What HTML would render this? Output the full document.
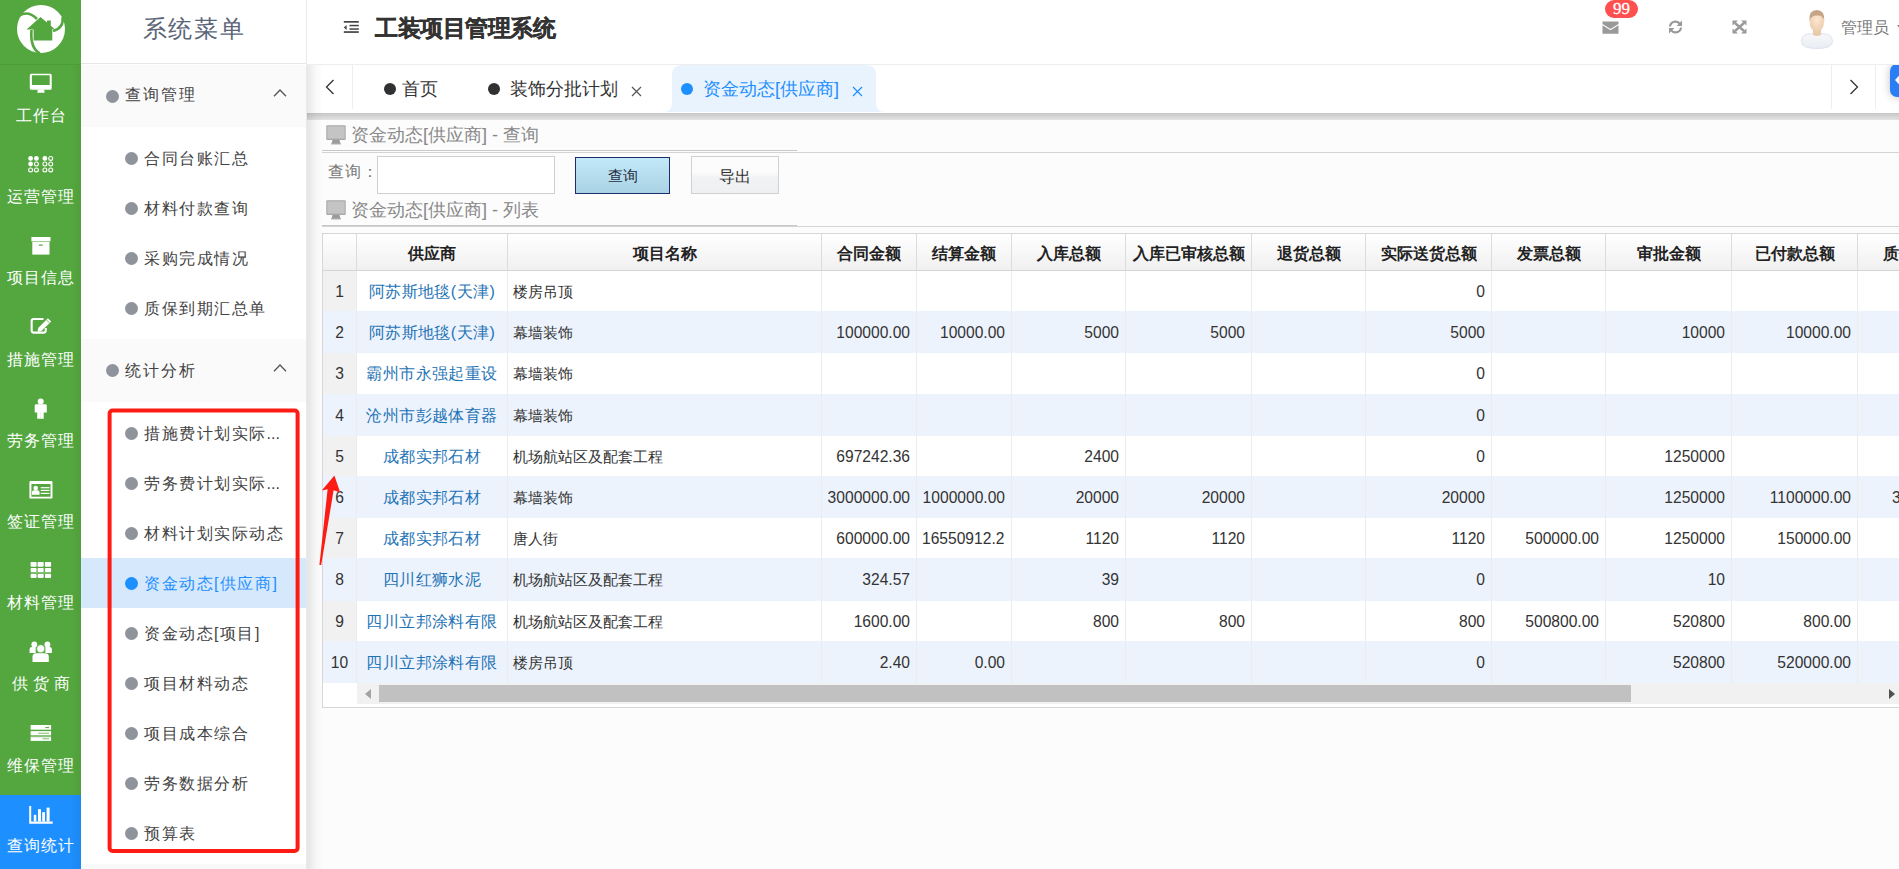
<!DOCTYPE html>
<html><head><meta charset="utf-8">
<style>
*{box-sizing:border-box}
html,body{margin:0;padding:0}
body{width:1899px;height:869px;overflow:hidden;position:relative;font-family:"Liberation Sans",sans-serif;background:#fcfcfc;color:#333}
.abs{position:absolute}
#lnav{left:0;top:0;width:81px;height:869px;background:#54a73f}
#lnav .it{position:absolute;left:0;width:81px;height:81.2px;color:#fff;font-size:16px;text-align:center}
#lnav .it .ic{position:absolute;left:0;width:81px;top:6px;height:22px}
#lnav .it .tx{position:absolute;left:0;width:81px;top:41px;line-height:20px;white-space:nowrap;letter-spacing:1px;text-indent:1px}
#lnav .on{background:#1e8ffe}
#menu{left:81px;top:0;width:226px;height:869px;background:#fff;border-right:1px solid #eaeaea}
#menu .ttl{position:absolute;left:0;top:0;width:225px;height:64px;border-bottom:1px solid #e6e6e6;text-align:center;line-height:58px;font-size:24px;color:#5b6578;letter-spacing:1.6px;text-indent:1px}
.grp{position:absolute;left:0;width:225px;height:62px;background:#fafafa;font-size:16px;color:#424242;letter-spacing:2.1px}
.grp .dot{position:absolute;left:25px;top:24.5px;width:13px;height:13px;border-radius:50%;background:#8f939b}
.grp .tx{position:absolute;left:44px;top:20px;line-height:20px}
.grp svg{position:absolute;left:192px;top:24px}
.sub{position:absolute;left:0;width:225px;height:50px;font-size:16px;color:#424242;letter-spacing:1.5px}
.sub .dot{position:absolute;left:44px;top:19px;width:13px;height:13px;border-radius:50%;background:#8f939b}
.sub .tx{position:absolute;left:63px;top:16px;line-height:20px;white-space:nowrap}
.sub.on{background:#d5e8fc;color:#1e8ffe}
.sub.on .dot{background:#1e8ffe}
#hdr{left:307px;top:0;width:1592px;height:65px;background:#fff;border-bottom:1px solid #eeeeee}
#tabs{left:307px;top:65px;width:1592px;height:48px;background:#fff;overflow:hidden}
.tab{position:absolute;top:13px;height:22px;line-height:22px;font-size:18px;color:#333;white-space:nowrap}
.tab .dt{display:inline-block;width:12px;height:12px;border-radius:50%;background:#303133;margin-right:10px;vertical-align:0px}
.tab .x{display:inline-block;margin-left:13px;vertical-align:-2px;stroke:#555}
.tab.on{color:#1e8ffe}
.tab.on .dt{background:#1e8ffe}
.tab.on .x{stroke:#1e8ffe}
.sect{position:absolute;left:326px;height:22px;white-space:nowrap;font-size:18px;color:#888;line-height:22px}
.sect svg{position:absolute;left:0;top:1px}
.sect span{position:absolute;left:25px;top:0}
.th{position:absolute;top:2px;height:36px;line-height:36px;text-align:center;font-size:16px;font-weight:bold;color:#222;white-space:nowrap;overflow:hidden}
.td{position:absolute;height:41px;line-height:41px;font-size:15.6px;padding-top:1px;color:#333;white-space:nowrap;overflow:hidden}
.td.num{text-align:center;color:#333}
.td.sup{text-align:center;color:#1f74b6;font-size:16px;letter-spacing:.4px}
.td.prj{padding-left:5px;font-size:15px}
.td.rt{text-align:right;padding-right:6px}
</style></head><body>

<!-- left green nav -->
<div id="lnav" class="abs">
  <svg class="abs" style="left:0;top:0" width="81" height="64" viewBox="0 0 81 64">
    <circle cx="41" cy="29" r="24" fill="#fff"/>
    <path d="M26.5 29.5 L40.5 17 L47 22.5 L47 20.6 L50.8 20.6 L50.8 25.8 L54.5 29 L52.3 29 L52.3 40.5 L33.6 40.5 L33.6 29.5 Z" fill="#54a73f"/>
    <path d="M19 15.8 Q28 10 37 19" stroke="#54a73f" stroke-width="2.6" fill="none"/>
    <path d="M62.6 17 Q64 28 53 31" stroke="#54a73f" stroke-width="2.6" fill="none"/>
    <path d="M39.8 53.4 Q30 48 31.5 30" stroke="#54a73f" stroke-width="2.6" fill="none"/>
  </svg>
  <div class="abs" style="left:0;top:64px;width:81px;height:1px;background:#4c9a38"></div>
  <div class="it" style="top:65px"><div class="ic"></div><div class="tx">工作台</div></div>
  <div class="it" style="top:146.2px"><div class="ic"></div><div class="tx">运营管理</div></div>
  <div class="it" style="top:227.4px"><div class="ic"></div><div class="tx">项目信息</div></div>
  <div class="it" style="top:308.6px"><div class="ic"></div><div class="tx">措施管理</div></div>
  <div class="it" style="top:389.8px"><div class="ic"></div><div class="tx">劳务管理</div></div>
  <div class="it" style="top:471px"><div class="ic"></div><div class="tx">签证管理</div></div>
  <div class="it" style="top:552.2px"><div class="ic"></div><div class="tx">材料管理</div></div>
  <div class="it" style="top:633.4px"><div class="ic"></div><div class="tx" style="letter-spacing:0.4px">供 货 商</div></div>
  <div class="it" style="top:714.6px"><div class="ic"></div><div class="tx">维保管理</div></div>
  <div class="it on" style="top:795px;height:74px"><div class="ic"></div><div class="tx">查询统计</div></div>
<svg class="abs" style="left:20px;top:66px" width="42" height="34" viewBox="0 0 42 34"><path fill-rule="evenodd" fill="#fff" d="M11.3 7.8 H30.2 Q31.7 7.8 31.7 9.3 V22.2 Q31.7 23.7 30.2 23.7 H11.3 Q9.8 23.7 9.8 22.2 V9.3 Q9.8 7.8 11.3 7.8 Z M11.9 9.2 V19 H29.7 V9.2 Z"/><path fill="#fff" d="M17.6 23.5 H24.3 V25.6 Q24.7 25.8 24.7 26.8 H17.2 Q17.2 25.8 17.6 25.6 Z"/></svg>
<svg class="abs" style="left:20px;top:148px" width="42" height="34" viewBox="0 0 42 34"><circle cx="10.6" cy="10.4" r="2.4" fill="#fff"/><circle cx="16.4" cy="10.4" r="2.4" fill="#fff"/><circle cx="24.9" cy="10.4" r="2.4" fill="#fff"/><circle cx="30.7" cy="10.4" r="1.95" fill="none" stroke="#fff" stroke-width="1.1"/><circle cx="10.6" cy="16.0" r="2.4" fill="#fff"/><circle cx="16.4" cy="16.0" r="1.95" fill="none" stroke="#fff" stroke-width="1.1"/><circle cx="24.9" cy="16.0" r="1.95" fill="none" stroke="#fff" stroke-width="1.1"/><circle cx="30.7" cy="16.0" r="1.95" fill="none" stroke="#fff" stroke-width="1.1"/><circle cx="10.6" cy="21.9" r="1.95" fill="none" stroke="#fff" stroke-width="1.1"/><circle cx="16.4" cy="21.9" r="1.95" fill="none" stroke="#fff" stroke-width="1.1"/><circle cx="24.9" cy="21.9" r="1.95" fill="none" stroke="#fff" stroke-width="1.1"/><circle cx="30.7" cy="21.9" r="1.95" fill="none" stroke="#fff" stroke-width="1.1"/></svg>
<svg class="abs" style="left:20px;top:229px" width="42" height="34" viewBox="0 0 42 34"><rect x="11.4" y="8" width="19.1" height="4.4" fill="#fff"/><rect x="12.3" y="12.9" width="17.2" height="12.7" fill="#fff"/><rect x="18.8" y="15.6" width="4.1" height="1.2" rx="0.6" fill="#54a73f"/></svg>
<svg class="abs" style="left:20px;top:310px" width="42" height="34" viewBox="0 0 42 34"><path d="M23.5 9.05 H13.7 Q11.65 9.05 11.65 11.1 V20.6 Q11.65 22.65 13.7 22.65 H23.7 Q25.75 22.65 25.75 20.6 V18" fill="none" stroke="#fff" stroke-width="2.1"/><path fill="#fff" d="M27.9 8.2 L31.2 11.4 L21.4 21.1 L17.6 21.9 L18.2 18 Z"/><path d="M26.3 9.8 L29.6 13" stroke="#54a73f" stroke-width="0.8"/></svg>
<svg class="abs" style="left:20px;top:392px" width="42" height="34" viewBox="0 0 42 34"><circle cx="20.7" cy="9.4" r="3" fill="#fff"/><path fill="#fff" d="M16 12.3 H25.5 Q26.8 12.3 26.8 13.6 V20.4 H23.7 V26.8 H17.2 V20.4 H14.7 V13.6 Q14.7 12.3 16 12.3 Z"/><rect x="20.3" y="20.4" width="0.5" height="6.4" fill="#d8e8d0"/></svg>
<svg class="abs" style="left:20px;top:473px" width="42" height="34" viewBox="0 0 42 34"><path fill-rule="evenodd" fill="#fff" d="M10.6 8 H31.3 Q32.5 8 32.5 9.2 V24.4 Q32.5 25.6 31.3 25.6 H10.6 Q9.4 25.6 9.4 24.4 V9.2 Q9.4 8 10.6 8 Z M11.4 11 V23.7 H30.5 V11 Z"/><circle cx="15.7" cy="15.1" r="2.3" fill="#fff"/><path fill="#fff" d="M11.9 21.7 V19.4 Q11.9 17.2 14.2 17.2 H17.3 Q19.6 17.2 19.6 19.4 V21.7 Z"/><rect x="20.7" y="14.1" width="8.8" height="1.2" fill="#fff"/><rect x="20.7" y="16.8" width="8.8" height="1.2" fill="#fff"/><rect x="20.7" y="19.8" width="8.8" height="1.2" fill="#fff"/></svg>
<svg class="abs" style="left:20px;top:554px" width="42" height="34" viewBox="0 0 42 34"><rect x="10.6" y="8" width="6" height="4.7" rx="0.8" fill="#fff"/><rect x="17.6" y="8" width="6.1" height="4.7" rx="0.8" fill="#fff"/><rect x="24.9" y="8" width="6.2" height="4.7" rx="0.8" fill="#fff"/><rect x="10.6" y="14.1" width="6" height="3.9" rx="0.8" fill="#fff"/><rect x="17.6" y="14.1" width="6.1" height="3.9" rx="0.8" fill="#fff"/><rect x="24.9" y="14.1" width="6.2" height="3.9" rx="0.8" fill="#fff"/><rect x="10.6" y="20" width="6" height="3.9" rx="0.8" fill="#fff"/><rect x="17.6" y="20" width="6.1" height="3.9" rx="0.8" fill="#fff"/><rect x="24.9" y="20" width="6.2" height="3.9" rx="0.8" fill="#fff"/><rect x="10.6" y="18.2" width="20.5" height="1.5" fill="#8cc47c"/></svg>
<svg class="abs" style="left:20px;top:635px" width="42" height="34" viewBox="0 0 42 34"><circle cx="14.3" cy="9.4" r="2.9" fill="#fff"/><circle cx="27.4" cy="9.4" r="2.9" fill="#fff"/><path fill="#fff" d="M9.6 18 V14.3 Q9.6 12.1 11.8 12.1 H15.7 V18 Z"/><path fill="#fff" d="M31.9 18 V14.3 Q31.9 12.1 29.7 12.1 H25.4 V18 Z"/><circle cx="20.7" cy="13.7" r="4" fill="#fff" stroke="#54a73f" stroke-width="0.6"/><path fill="#fff" d="M12.5 27 V21.7 Q12.5 18.2 16 18.2 H25.3 Q28.8 18.2 28.8 21.7 V27 Z"/></svg>
<svg class="abs" style="left:20px;top:716px" width="42" height="34" viewBox="0 0 42 34"><rect x="10.6" y="9" width="20.5" height="4.7" fill="#fff"/><rect x="10.6" y="15.1" width="20.5" height="3.9" fill="#fff"/><rect x="10.6" y="21.1" width="20.5" height="3.8" fill="#fff"/><rect x="10.6" y="19" width="20.5" height="2.1" fill="#8cc47c"/><rect x="25.4" y="11" width="3.6" height="1.1" fill="#54a73f"/><rect x="18.2" y="16.7" width="10.8" height="1.1" fill="#8cc47c"/><rect x="22.5" y="22.2" width="6.5" height="1.1" fill="#8cc47c"/></svg>
<svg class="abs" style="left:20px;top:780px" width="42" height="50" viewBox="0 0 42 50"><path fill="#fff" d="M9.2 26.1 H11.2 V41.5 H32.7 V43.8 H9.2 Z"/><rect x="13.8" y="34.8" width="2.5" height="6.7" fill="#fff"/><rect x="18" y="29.2" width="3" height="12.3" fill="#fff"/><rect x="22.2" y="32.2" width="2.8" height="9.3" fill="#fff"/><rect x="26.6" y="27.6" width="3" height="13.9" fill="#fff"/></svg>
</div>
<div class="abs" style="left:71px;top:65px;width:10px;height:804px;background:linear-gradient(90deg,rgba(0,0,0,0),rgba(0,0,0,.055))"></div>

<!-- second menu -->
<div id="menu" class="abs">
  <div class="ttl">系统菜单</div>
  <div class="grp" style="top:65px"><div class="dot"></div><div class="tx">查询管理</div><svg width="14" height="8" viewBox="0 0 14 8"><path d="M1 7.3 L7 1 L13 7.3" stroke="#555" stroke-width="1.3" fill="none"/></svg></div>
  <div class="sub" style="top:133px"><div class="dot"></div><div class="tx">合同台账汇总</div></div>
  <div class="sub" style="top:183px"><div class="dot"></div><div class="tx">材料付款查询</div></div>
  <div class="sub" style="top:233px"><div class="dot"></div><div class="tx">采购完成情况</div></div>
  <div class="sub" style="top:283px"><div class="dot"></div><div class="tx">质保到期汇总单</div></div>
  <div class="grp" style="top:339px;height:63px"><div class="dot" style="top:25px"></div><div class="tx" style="top:21.5px">统计分析</div><svg style="top:24.5px" width="14" height="8" viewBox="0 0 14 8"><path d="M1 7.3 L7 1 L13 7.3" stroke="#555" stroke-width="1.3" fill="none"/></svg></div>
  <div class="sub" style="top:408px"><div class="dot"></div><div class="tx">措施费计划实际<span style="letter-spacing:0">...</span></div></div>
  <div class="sub" style="top:458px"><div class="dot"></div><div class="tx">劳务费计划实际<span style="letter-spacing:0">...</span></div></div>
  <div class="sub" style="top:508px"><div class="dot"></div><div class="tx">材料计划实际动态</div></div>
  <div class="sub on" style="top:558px"><div class="dot"></div><div class="tx">资金动态[供应商]</div></div>
  <div class="sub" style="top:608px"><div class="dot"></div><div class="tx">资金动态[项目]</div></div>
  <div class="sub" style="top:658px"><div class="dot"></div><div class="tx">项目材料动态</div></div>
  <div class="sub" style="top:708px"><div class="dot"></div><div class="tx">项目成本综合</div></div>
  <div class="sub" style="top:758px"><div class="dot"></div><div class="tx">劳务数据分析</div></div>
  <div class="abs" style="left:0;top:864px;width:225px;height:5px;background:#f9f9f9"></div>
  <div class="sub" style="top:808px"><div class="dot"></div><div class="tx">预算表</div></div>
</div>

<!-- header -->
<div id="hdr" class="abs">
  <svg class="abs" style="left:36px;top:20px" width="16" height="14" viewBox="0 0 16 14">
    <rect x="0.8" y="1" width="15" height="1.7" fill="#444"/>
    <rect x="6.5" y="4.8" width="9.3" height="1.5" fill="#444"/>
    <rect x="6.5" y="8.3" width="9.3" height="1.5" fill="#444"/>
    <rect x="0.8" y="11.2" width="15" height="1.7" fill="#444"/>
    <path d="M0.8 7.5 L3.6 5 L3.6 10 Z" fill="#444"/>
  </svg>
  <div class="abs" style="left:68px;top:14.5px;font-size:22.5px;font-weight:bold;color:#333;line-height:28px;white-space:nowrap;letter-spacing:-0.5px;-webkit-text-stroke:0.35px #333">工装项目管理系统</div>
  <div class="abs" style="left:1298px;top:0;width:33px;height:18px;border-radius:9px;background:#ff5050;color:#fff;font-family:'Liberation Serif',serif;font-size:17px;line-height:17px;text-align:center;-webkit-text-stroke:.3px #fff">99</div>
  <svg class="abs" style="left:1295px;top:21px" width="17" height="13" viewBox="0 0 17 13">
    <path d="M0.5 0.5 H16.5 V3 L8.5 8 L0.5 3 Z" fill="#999"/>
    <path d="M0.5 4.3 L8.5 9.3 L16.5 4.3 V12.7 H0.5 Z" fill="#999"/>
  </svg>
  <svg class="abs" style="left:1361px;top:20px" width="15" height="14" viewBox="0 0 15 14">
    <path d="M2 6.5 A5.5 5.5 0 0 1 12 4" stroke="#999" stroke-width="2.2" fill="none"/>
    <path d="M14 0.5 V6 H8.6 Z" fill="#999"/>
    <path d="M13 7.5 A5.5 5.5 0 0 1 3 10" stroke="#999" stroke-width="2.2" fill="none"/>
    <path d="M1 13.5 V8 H6.4 Z" fill="#999"/>
  </svg>
  <svg class="abs" style="left:1425px;top:20px" width="15" height="14" viewBox="0 0 15 14">
    <path d="M3 3 L12 11 M12 3 L3 11" stroke="#999" stroke-width="2.4"/>
    <path d="M0.5 0.5 H6 L0.5 5.5 Z M14.5 0.5 H9 L14.5 5.5 Z M0.5 13.5 H6 L0.5 8.5 Z M14.5 13.5 H9 L14.5 8.5 Z" fill="#999"/>
  </svg>
  <svg class="abs" style="left:1493px;top:9px" width="34" height="41" viewBox="0 0 34 41">
    <defs><radialGradient id="fc" cx="50%" cy="40%" r="65%"><stop offset="0" stop-color="#fbe7d4"/><stop offset="1" stop-color="#eccaa8"/></radialGradient>
    <linearGradient id="bd" x1="0" y1="0" x2="0" y2="1"><stop offset="0" stop-color="#f7f8fb"/><stop offset="1" stop-color="#e9ecf3"/></linearGradient></defs>
    <path d="M1.5 32.5 Q1.5 25 10 24.8 H24 Q32.5 25 32.5 32.5 Q32.5 39.5 17 39.5 Q1.5 39.5 1.5 32.5 Z" fill="url(#bd)" stroke="#d9dde8" stroke-width="0.8"/>
    <path d="M13 20 H21 V26 Q17 28 13 26 Z" fill="#e8c9a8"/>
    <ellipse cx="16.8" cy="12.5" rx="7.2" ry="10.5" fill="url(#fc)"/>
    <path d="M9.3 12 Q8.8 1 16.8 1 Q24.8 1 24.3 12 Q23 6 17.5 6.5 Q11 6 9.3 12 Z" fill="#c6a486"/>
  </svg>
  <div class="abs" style="left:1534px;top:18px;font-size:16px;color:#777;line-height:20px;white-space:nowrap">管理员</div>
  <svg class="abs" style="left:1590px;top:25px" width="6" height="5" viewBox="0 0 6 5"><path d="M0 0 H6 L3 4 Z" fill="#888"/></svg>
</div>
<div id="tabs" class="abs">
  <svg class="abs" style="left:18px;top:14px" width="10" height="16" viewBox="0 0 10 16"><path d="M8.5 1 L1.5 8 L8.5 15" stroke="#333" stroke-width="1.3" fill="none"/></svg>
  <div class="abs" style="left:45px;top:0;width:1px;height:44px;background:#eee"></div>
  <div class="tab" style="left:77px"><span class="dt" style="margin-right:6px"></span>首页</div>
  <div class="tab" style="left:181px"><span class="dt"></span>装饰分批计划<svg class="x" width="11" height="11" viewBox="0 0 11 11"><path d="M1 1 L10 10 M10 1 L1 10" stroke-width="1.2"/></svg></div>
  <svg class="abs" style="left:356px;top:0" width="222" height="47" viewBox="0 0 222 47">
    <path d="M0 47 Q9 47 9 38 V10 Q9 0 19 0 H203 Q213 0 213 10 V38 Q213 47 222 47 Z" fill="#e8f3fe"/>
  </svg>
  <div class="tab on" style="left:374px"><span class="dt"></span>资金动态[供应商]<svg class="x" width="11" height="11" viewBox="0 0 11 11"><path d="M1 1 L10 10 M10 1 L1 10" stroke-width="1.2"/></svg></div>
  <div class="abs" style="left:1524px;top:0;width:1px;height:44px;background:#eee"></div>
  <svg class="abs" style="left:1542px;top:14px" width="10" height="16" viewBox="0 0 10 16"><path d="M1.5 1 L8.5 8 L1.5 15" stroke="#333" stroke-width="1.3" fill="none"/></svg>
  <div class="abs" style="left:1568px;top:0;width:1px;height:44px;background:#eee"></div>
  <div class="abs" style="left:1583px;top:-1px;width:20px;height:33px;border-radius:7px;background:#2a7ef5;box-shadow:0 0 8px rgba(0,0,0,.25)"></div>
  <svg class="abs" style="left:1587px;top:7px" width="12" height="16" viewBox="0 0 12 16"><path d="M1 8 L7 1.5 L10 4.5 L6.5 8 L10 11.5 L7 14.5 Z" fill="#fff"/></svg>
</div>


<!-- content -->

<div class="sect" style="top:124px"><svg width="20" height="20" viewBox="0 0 20 20"><rect x="0.3" y="0.3" width="19.4" height="14.6" rx="1" fill="#a6a6a6"/><rect x="1.3" y="1.3" width="17.4" height="12.4" fill="#c4c4c4"/><path d="M6.5 15 H13.5 L14.5 19 H5.5 Z" fill="#9a9a9a"/><rect x="5" y="18.2" width="10" height="1.3" fill="#b0b0b0"/><rect x="9.3" y="13.4" width="1.4" height="1" fill="#9c6"/></svg><span>资金动态[供应商] - 查询</span></div>
<div class="abs" style="left:322px;top:150px;width:475px;height:1px;background:#c8c8c8"></div>
<div class="abs" style="left:322px;top:152px;width:1577px;height:1px;background:#d4d4d4"></div>
<div class="abs" style="left:328px;top:162px;font-size:16px;color:#777;line-height:20px;white-space:nowrap;letter-spacing:1px">查询：</div>
<div class="abs" style="left:377px;top:156px;width:178px;height:38px;border:1px solid #cfcfcf;background:#fff"></div>
<div class="abs" style="left:575px;top:157px;width:95px;height:37px;border:1px solid #1d2c6b;background:linear-gradient(#c2e9f8,#a9d2e4);font-size:15px;line-height:35px;text-align:center;color:#262c40">查询</div>
<div class="abs" style="left:691px;top:156px;width:88px;height:38px;border:1px solid #d0d0d0;background:linear-gradient(#fcfcfc 40%,#f1f2f4 58%,#eff0f2);font-size:16px;line-height:40px;text-align:center;color:#333">导出</div>
<div class="sect" style="top:199px"><svg width="20" height="20" viewBox="0 0 20 20"><rect x="0.3" y="0.3" width="19.4" height="14.6" rx="1" fill="#a6a6a6"/><rect x="1.3" y="1.3" width="17.4" height="12.4" fill="#c4c4c4"/><path d="M6.5 15 H13.5 L14.5 19 H5.5 Z" fill="#9a9a9a"/><rect x="5" y="18.2" width="10" height="1.3" fill="#b0b0b0"/><rect x="9.3" y="13.4" width="1.4" height="1" fill="#9c6"/></svg><span>资金动态[供应商] - 列表</span></div>
<div class="abs" style="left:322px;top:225px;width:475px;height:1px;background:#c8c8c8"></div>
<div class="abs" style="left:322px;top:226px;width:1577px;height:1px;background:#d4d4d4"></div>
<div id="grid" class="abs" style="left:322px;top:233px;width:1577px;height:475px;border:1px solid #d6d6d6;border-right:none;background:#fff;overflow:hidden">
<div class="abs" style="left:0;top:0;width:1600px;height:37px;background:linear-gradient(#ffffff,#f0f0f0);border-bottom:1px solid #d4d4d4"></div>
<div class="abs" style="left:0;top:37.0px;width:1600px;height:40.2px;background:#fff"></div>
<div class="abs" style="left:0;top:37.0px;width:34px;height:40.2px;background:#f1f1f1"></div>
<div class="abs" style="left:0;top:77.2px;width:1600px;height:42.2px;background:#edf3fd"></div>
<div class="abs" style="left:0;top:119.4px;width:1600px;height:40.2px;background:#fff"></div>
<div class="abs" style="left:0;top:119.4px;width:34px;height:40.2px;background:#f1f1f1"></div>
<div class="abs" style="left:0;top:159.6px;width:1600px;height:42.2px;background:#edf3fd"></div>
<div class="abs" style="left:0;top:201.8px;width:1600px;height:40.2px;background:#fff"></div>
<div class="abs" style="left:0;top:201.8px;width:34px;height:40.2px;background:#f1f1f1"></div>
<div class="abs" style="left:0;top:242.0px;width:1600px;height:42.2px;background:#edf3fd"></div>
<div class="abs" style="left:0;top:284.2px;width:1600px;height:40.2px;background:#fff"></div>
<div class="abs" style="left:0;top:284.2px;width:34px;height:40.2px;background:#f1f1f1"></div>
<div class="abs" style="left:0;top:324.4px;width:1600px;height:42.2px;background:#edf3fd"></div>
<div class="abs" style="left:0;top:366.6px;width:1600px;height:40.2px;background:#fff"></div>
<div class="abs" style="left:0;top:366.6px;width:34px;height:40.2px;background:#f1f1f1"></div>
<div class="abs" style="left:0;top:406.8px;width:1600px;height:42.2px;background:#edf3fd"></div>
<div class="abs" style="left:33px;top:0;width:1px;height:37px;background:#dcdcdc"></div>
<div class="abs" style="left:33px;top:37px;width:1px;height:412px;background:#ececec"></div>
<div class="abs" style="left:184px;top:0;width:1px;height:37px;background:#dcdcdc"></div>
<div class="abs" style="left:184px;top:37px;width:1px;height:412px;background:#ececec"></div>
<div class="abs" style="left:498px;top:0;width:1px;height:37px;background:#dcdcdc"></div>
<div class="abs" style="left:498px;top:37px;width:1px;height:412px;background:#ececec"></div>
<div class="abs" style="left:593px;top:0;width:1px;height:37px;background:#dcdcdc"></div>
<div class="abs" style="left:593px;top:37px;width:1px;height:412px;background:#ececec"></div>
<div class="abs" style="left:688px;top:0;width:1px;height:37px;background:#dcdcdc"></div>
<div class="abs" style="left:688px;top:37px;width:1px;height:412px;background:#ececec"></div>
<div class="abs" style="left:802px;top:0;width:1px;height:37px;background:#dcdcdc"></div>
<div class="abs" style="left:802px;top:37px;width:1px;height:412px;background:#ececec"></div>
<div class="abs" style="left:928px;top:0;width:1px;height:37px;background:#dcdcdc"></div>
<div class="abs" style="left:928px;top:37px;width:1px;height:412px;background:#ececec"></div>
<div class="abs" style="left:1042px;top:0;width:1px;height:37px;background:#dcdcdc"></div>
<div class="abs" style="left:1042px;top:37px;width:1px;height:412px;background:#ececec"></div>
<div class="abs" style="left:1168px;top:0;width:1px;height:37px;background:#dcdcdc"></div>
<div class="abs" style="left:1168px;top:37px;width:1px;height:412px;background:#ececec"></div>
<div class="abs" style="left:1282px;top:0;width:1px;height:37px;background:#dcdcdc"></div>
<div class="abs" style="left:1282px;top:37px;width:1px;height:412px;background:#ececec"></div>
<div class="abs" style="left:1408px;top:0;width:1px;height:37px;background:#dcdcdc"></div>
<div class="abs" style="left:1408px;top:37px;width:1px;height:412px;background:#ececec"></div>
<div class="abs" style="left:1534px;top:0;width:1px;height:37px;background:#dcdcdc"></div>
<div class="abs" style="left:1534px;top:37px;width:1px;height:412px;background:#ececec"></div>
<div class="th" style="left:34px;width:150px">供应商</div>
<div class="th" style="left:185px;width:313px">项目名称</div>
<div class="th" style="left:499px;width:94px">合同金额</div>
<div class="th" style="left:594px;width:94px">结算金额</div>
<div class="th" style="left:689px;width:113px">入库总额</div>
<div class="th" style="left:803px;width:125px">入库已审核总额</div>
<div class="th" style="left:929px;width:113px">退货总额</div>
<div class="th" style="left:1043px;width:125px">实际送货总额</div>
<div class="th" style="left:1169px;width:113px">发票总额</div>
<div class="th" style="left:1283px;width:125px">审批金额</div>
<div class="th" style="left:1409px;width:125px">已付款总额</div>
<div class="th" style="left:1560px;width:60px;text-align:left">质保金额</div>
<div class="td num" style="left:0;width:33px;top:37.0px;height:40.2px;line-height:40.2px">1</div>
<div class="td sup" style="left:34px;width:150px;top:37.0px;height:40.2px;line-height:40.2px">阿苏斯地毯(天津)</div>
<div class="td prj" style="left:185px;width:313px;top:37.0px;height:40.2px;line-height:40.2px">楼房吊顶</div>
<div class="td rt" style="left:1043px;width:125px;top:37.0px;height:40.2px;line-height:40.2px">0</div>
<div class="td num" style="left:0;width:33px;top:77.2px;height:42.2px;line-height:42.2px">2</div>
<div class="td sup" style="left:34px;width:150px;top:77.2px;height:42.2px;line-height:42.2px">阿苏斯地毯(天津)</div>
<div class="td prj" style="left:185px;width:313px;top:77.2px;height:42.2px;line-height:42.2px">幕墙装饰</div>
<div class="td rt" style="left:499px;width:94px;top:77.2px;height:42.2px;line-height:42.2px">100000.00</div>
<div class="td rt" style="left:594px;width:94px;top:77.2px;height:42.2px;line-height:42.2px">10000.00</div>
<div class="td rt" style="left:689px;width:113px;top:77.2px;height:42.2px;line-height:42.2px">5000</div>
<div class="td rt" style="left:803px;width:125px;top:77.2px;height:42.2px;line-height:42.2px">5000</div>
<div class="td rt" style="left:1043px;width:125px;top:77.2px;height:42.2px;line-height:42.2px">5000</div>
<div class="td rt" style="left:1283px;width:125px;top:77.2px;height:42.2px;line-height:42.2px">10000</div>
<div class="td rt" style="left:1409px;width:125px;top:77.2px;height:42.2px;line-height:42.2px">10000.00</div>
<div class="td num" style="left:0;width:33px;top:119.4px;height:40.2px;line-height:40.2px">3</div>
<div class="td sup" style="left:34px;width:150px;top:119.4px;height:40.2px;line-height:40.2px">霸州市永强起重设</div>
<div class="td prj" style="left:185px;width:313px;top:119.4px;height:40.2px;line-height:40.2px">幕墙装饰</div>
<div class="td rt" style="left:1043px;width:125px;top:119.4px;height:40.2px;line-height:40.2px">0</div>
<div class="td num" style="left:0;width:33px;top:159.6px;height:42.2px;line-height:42.2px">4</div>
<div class="td sup" style="left:34px;width:150px;top:159.6px;height:42.2px;line-height:42.2px">沧州市彭越体育器</div>
<div class="td prj" style="left:185px;width:313px;top:159.6px;height:42.2px;line-height:42.2px">幕墙装饰</div>
<div class="td rt" style="left:1043px;width:125px;top:159.6px;height:42.2px;line-height:42.2px">0</div>
<div class="td num" style="left:0;width:33px;top:201.8px;height:40.2px;line-height:40.2px">5</div>
<div class="td sup" style="left:34px;width:150px;top:201.8px;height:40.2px;line-height:40.2px">成都实邦石材</div>
<div class="td prj" style="left:185px;width:313px;top:201.8px;height:40.2px;line-height:40.2px">机场航站区及配套工程</div>
<div class="td rt" style="left:499px;width:94px;top:201.8px;height:40.2px;line-height:40.2px">697242.36</div>
<div class="td rt" style="left:689px;width:113px;top:201.8px;height:40.2px;line-height:40.2px">2400</div>
<div class="td rt" style="left:1043px;width:125px;top:201.8px;height:40.2px;line-height:40.2px">0</div>
<div class="td rt" style="left:1283px;width:125px;top:201.8px;height:40.2px;line-height:40.2px">1250000</div>
<div class="td num" style="left:0;width:33px;top:242.0px;height:42.2px;line-height:42.2px">6</div>
<div class="td sup" style="left:34px;width:150px;top:242.0px;height:42.2px;line-height:42.2px">成都实邦石材</div>
<div class="td prj" style="left:185px;width:313px;top:242.0px;height:42.2px;line-height:42.2px">幕墙装饰</div>
<div class="td rt" style="left:499px;width:94px;top:242.0px;height:42.2px;line-height:42.2px">3000000.00</div>
<div class="td rt" style="left:594px;width:94px;top:242.0px;height:42.2px;line-height:42.2px">1000000.00</div>
<div class="td rt" style="left:689px;width:113px;top:242.0px;height:42.2px;line-height:42.2px">20000</div>
<div class="td rt" style="left:803px;width:125px;top:242.0px;height:42.2px;line-height:42.2px">20000</div>
<div class="td rt" style="left:1043px;width:125px;top:242.0px;height:42.2px;line-height:42.2px">20000</div>
<div class="td rt" style="left:1283px;width:125px;top:242.0px;height:42.2px;line-height:42.2px">1250000</div>
<div class="td rt" style="left:1409px;width:125px;top:242.0px;height:42.2px;line-height:42.2px">1100000.00</div>
<div class="td" style="left:1569px;width:80px;top:242.0px;height:42.2px;line-height:42.2px">300000.00</div>
<div class="td num" style="left:0;width:33px;top:284.2px;height:40.2px;line-height:40.2px">7</div>
<div class="td sup" style="left:34px;width:150px;top:284.2px;height:40.2px;line-height:40.2px">成都实邦石材</div>
<div class="td prj" style="left:185px;width:313px;top:284.2px;height:40.2px;line-height:40.2px">唐人街</div>
<div class="td rt" style="left:499px;width:94px;top:284.2px;height:40.2px;line-height:40.2px">600000.00</div>
<div class="td" style="left:594px;width:88px;top:284.2px;height:40.2px;line-height:40.2px;padding-left:5px">16550912.2</div>
<div class="td rt" style="left:689px;width:113px;top:284.2px;height:40.2px;line-height:40.2px">1120</div>
<div class="td rt" style="left:803px;width:125px;top:284.2px;height:40.2px;line-height:40.2px">1120</div>
<div class="td rt" style="left:1043px;width:125px;top:284.2px;height:40.2px;line-height:40.2px">1120</div>
<div class="td rt" style="left:1169px;width:113px;top:284.2px;height:40.2px;line-height:40.2px">500000.00</div>
<div class="td rt" style="left:1283px;width:125px;top:284.2px;height:40.2px;line-height:40.2px">1250000</div>
<div class="td rt" style="left:1409px;width:125px;top:284.2px;height:40.2px;line-height:40.2px">150000.00</div>
<div class="td num" style="left:0;width:33px;top:324.4px;height:42.2px;line-height:42.2px">8</div>
<div class="td sup" style="left:34px;width:150px;top:324.4px;height:42.2px;line-height:42.2px">四川红狮水泥</div>
<div class="td prj" style="left:185px;width:313px;top:324.4px;height:42.2px;line-height:42.2px">机场航站区及配套工程</div>
<div class="td rt" style="left:499px;width:94px;top:324.4px;height:42.2px;line-height:42.2px">324.57</div>
<div class="td rt" style="left:689px;width:113px;top:324.4px;height:42.2px;line-height:42.2px">39</div>
<div class="td rt" style="left:1043px;width:125px;top:324.4px;height:42.2px;line-height:42.2px">0</div>
<div class="td rt" style="left:1283px;width:125px;top:324.4px;height:42.2px;line-height:42.2px">10</div>
<div class="td num" style="left:0;width:33px;top:366.6px;height:40.2px;line-height:40.2px">9</div>
<div class="td sup" style="left:34px;width:150px;top:366.6px;height:40.2px;line-height:40.2px">四川立邦涂料有限</div>
<div class="td prj" style="left:185px;width:313px;top:366.6px;height:40.2px;line-height:40.2px">机场航站区及配套工程</div>
<div class="td rt" style="left:499px;width:94px;top:366.6px;height:40.2px;line-height:40.2px">1600.00</div>
<div class="td rt" style="left:689px;width:113px;top:366.6px;height:40.2px;line-height:40.2px">800</div>
<div class="td rt" style="left:803px;width:125px;top:366.6px;height:40.2px;line-height:40.2px">800</div>
<div class="td rt" style="left:1043px;width:125px;top:366.6px;height:40.2px;line-height:40.2px">800</div>
<div class="td rt" style="left:1169px;width:113px;top:366.6px;height:40.2px;line-height:40.2px">500800.00</div>
<div class="td rt" style="left:1283px;width:125px;top:366.6px;height:40.2px;line-height:40.2px">520800</div>
<div class="td rt" style="left:1409px;width:125px;top:366.6px;height:40.2px;line-height:40.2px">800.00</div>
<div class="td num" style="left:0;width:33px;top:406.8px;height:42.2px;line-height:42.2px">10</div>
<div class="td sup" style="left:34px;width:150px;top:406.8px;height:42.2px;line-height:42.2px">四川立邦涂料有限</div>
<div class="td prj" style="left:185px;width:313px;top:406.8px;height:42.2px;line-height:42.2px">楼房吊顶</div>
<div class="td rt" style="left:499px;width:94px;top:406.8px;height:42.2px;line-height:42.2px">2.40</div>
<div class="td rt" style="left:594px;width:94px;top:406.8px;height:42.2px;line-height:42.2px">0.00</div>
<div class="td rt" style="left:1043px;width:125px;top:406.8px;height:42.2px;line-height:42.2px">0</div>
<div class="td rt" style="left:1283px;width:125px;top:406.8px;height:42.2px;line-height:42.2px">520800</div>
<div class="td rt" style="left:1409px;width:125px;top:406.8px;height:42.2px;line-height:42.2px">520000.00</div>
<div class="abs" style="left:34px;top:449px;width:1600px;height:21px;background:#f1f1f1"></div>
<div class="abs" style="left:56px;top:451px;width:1252px;height:17px;background:#c1c1c1"></div>
<svg class="abs" style="left:42px;top:455px" width="6" height="10" viewBox="0 0 6 10"><path d="M6 0 V10 L0 5 Z" fill="#a3a3a3"/></svg>
<svg class="abs" style="left:1566px;top:455px" width="6" height="10" viewBox="0 0 6 10"><path d="M0 0 V10 L6 5 Z" fill="#505050"/></svg>
</div>
<div class="abs" style="left:307px;top:113px;width:1592px;height:7px;background:linear-gradient(#c6c6c6,#e3e3e3)"></div>
<div class="abs" style="left:307px;top:65px;width:16px;height:804px;background:linear-gradient(90deg,rgba(0,0,0,.095),rgba(0,0,0,.025) 55%,rgba(0,0,0,0))"></div>
<!-- annotations -->
<svg class="abs" style="left:100px;top:400px" width="210" height="460" viewBox="100 400 210 460"><rect x="109.6" y="410.5" width="188" height="440.5" rx="3" fill="none" stroke="#fd1c14" stroke-width="4"/></svg>
<svg class="abs" style="left:300px;top:460px" width="60" height="120" viewBox="300 460 60 120"><path d="M319.4 565 L327.6 489.3 L321.8 490.6 L334.4 475.4 L340.2 492.6 L333.6 490.2 L321.2 565 Z" fill="#fd1c14"/></svg>
</body></html>
